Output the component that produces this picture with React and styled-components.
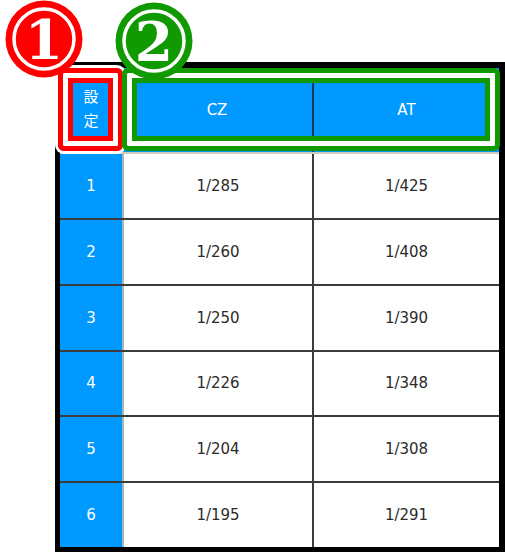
import React from "react";
import styled, { createGlobalStyle } from "styled-components";

const GlobalStyle = createGlobalStyle`
  html, body {
    margin: 0;
    padding: 0;
    background: #fff;
  }
  body {
    font-family: "DejaVu Sans", Verdana, sans-serif;
  }
`;

const Canvas = styled.div`
  position: relative;
  width: 505px;
  height: 554px;
  padding: 62px 0 0 55px;
  box-sizing: border-box;
  overflow: hidden;
`;

const Table = styled.div`
  width: 450px;
  height: 490px;
  box-sizing: border-box;
  border-style: solid;
  border-color: #000;
  border-width: 6px 6px 5px 5px;
  display: grid;
  grid-template-rows: 84px repeat(6, 1fr);
  background: #fff;
`;

const Row = styled.div`
  display: grid;
  grid-template-columns: 62px 190px 1fr;
  border-top: ${({ $first, $head }) =>
    $head ? "none" : $first ? "2px solid #cfcac4" : "2px solid #3c3c3c"};
`;

const HeadCell = styled.div`
  background: #0099ff;
  color: #fff;
  display: flex;
  align-items: center;
  justify-content: center;
  font-size: 15px;
  border-left: ${({ $line }) => ($line ? "2px solid #1b3b5e" : "none")};
`;

const StackText = styled.div`
  font-family: "Noto Sans CJK JP", sans-serif;
  font-size: 15px;
  line-height: 24px;
  text-align: center;
  width: 1em;
  margin-top: -4px;
`;

const NumCell = styled.div`
  background: #0099ff;
  color: #fff;
  display: flex;
  align-items: center;
  justify-content: center;
  font-size: 15px;
`;

const ValueCell = styled.div`
  background: #fff;
  color: #2b2b2b;
  display: flex;
  align-items: center;
  justify-content: center;
  font-size: 15px;
  border-left: ${({ $dark }) =>
    $dark ? "2px solid #3c3c3c" : "2px solid #a9b4bd"};
`;

const Mark = styled.div`
  position: absolute;
  left: ${({ $x }) => $x}px;
  top: ${({ $y }) => $y}px;
  width: ${({ $w }) => $w}px;
  height: ${({ $h }) => $h}px;
  box-sizing: border-box;
  border: 5px solid ${({ $color }) => $color};
  border-radius: 6px;
  box-shadow: ${({ $color, $halo }) =>
    `inset 0 0 0 5px #fff, inset 0 0 0 10px ${$color}${
      $halo ? ", 0 0 0 3px #fff" : ""
    }`};
  pointer-events: none;
`;

const Badge = styled.svg`
  position: absolute;
  left: ${({ $x }) => $x}px;
  top: ${({ $y }) => $y}px;
  width: 80px;
  height: 80px;
  overflow: visible;
`;

function CircleNum({ x, y, color, n }) {
  return (
    <Badge $x={x} $y={y} viewBox="0 0 80 80">
      <circle cx="40" cy="40" r="38.5" fill={color} />
      <circle cx="40" cy="40" r="30" fill="none" stroke="#fff" strokeWidth="3.5" />
      <text
        x="40"
        y="60"
        textAnchor="middle"
        fill="#fff"
        stroke={color}
        strokeWidth="1.2"
        paintOrder="stroke"
        fontFamily="'DejaVu Serif', serif"
        fontWeight="bold"
        fontSize="55"
      >
        {n}
      </text>
    </Badge>
  );
}

const rows = [
  ["1", "1/285", "1/425"],
  ["2", "1/260", "1/408"],
  ["3", "1/250", "1/390"],
  ["4", "1/226", "1/348"],
  ["5", "1/204", "1/308"],
  ["6", "1/195", "1/291"],
];

export default function App() {
  return (
    <>
      <GlobalStyle />
      <Canvas>
        <Table>
          <Row $head>
            <HeadCell>
              <StackText>設定</StackText>
            </HeadCell>
            <HeadCell>CZ</HeadCell>
            <HeadCell $line>AT</HeadCell>
          </Row>
          {rows.map((r, i) => (
            <Row key={r[0]} $first={i === 0}>
              <NumCell>{r[0]}</NumCell>
              <ValueCell>{r[1]}</ValueCell>
              <ValueCell $dark>{r[2]}</ValueCell>
            </Row>
          ))}
        </Table>
        <Mark $x={58} $y={68} $w={65} $h={83} $color="#ff0000" $halo />
        <Mark $x={122} $y={68} $w={378} $h={83} $color="#109a00" />
        <CircleNum x={4} y={-1} color="#ff0000" n="1" />
        <CircleNum x={114} y={1} color="#109a00" n="2" />
      </Canvas>
    </>
  );
}
